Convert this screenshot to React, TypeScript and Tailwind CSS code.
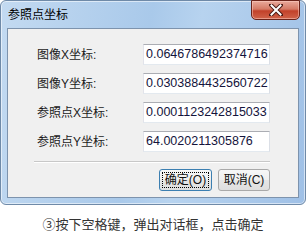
const rows = [
  { label: '图像X坐标:', value: '0.0646786492374716' },
  { label: '图像Y坐标:', value: '0.0303884432560722' },
  { label: '参照点X坐标:', value: '0.0001123242815033' },
  { label: '参照点Y坐标:', value: '64.0020211305876' },
];

const font = "font-['Liberation_Sans','Noto_Sans_CJK_SC',sans-serif]";

export default function App() {
  return (
    <div className={`w-[306px] h-[240px] bg-white flex flex-col ${font}`}>
      {/* window frame */}
      <div className="h-[205px] flex flex-col rounded-[6px] border border-[#6f8aa8] bg-[linear-gradient(100deg,#c3daf1_0%,#a9c9ea_45%,#b7d3ef_60%,#9fc0e6_100%)] shadow-[inset_0_0_0_1px_rgba(255,255,255,0.55)]">
        {/* title bar */}
        <div className="h-[27px] flex items-start">
          <span className="pl-[7px] pt-[7px] text-[12px] leading-[14px] text-black">参照点坐标</span>
          <button className="ml-auto mr-[5px] -mt-px w-[49px] h-[20px] flex items-center justify-center rounded-b-[5px] border border-[#6b231a] bg-[linear-gradient(180deg,#e9a99b_0%,#d57a66_45%,#c2412a_55%,#d0634a_100%)] shadow-[inset_0_0_0_1px_rgba(255,210,200,0.5)]">
            <svg width="14" height="12" viewBox="0 0 14 12">
              <path d="M2 1 L12 11 M12 1 L2 11" stroke="#4a1a14" strokeWidth="4" strokeLinecap="square" />
              <path d="M2.5 1.5 L11.5 10.5 M11.5 1.5 L2.5 10.5" stroke="#ffffff" strokeWidth="2" strokeLinecap="square" />
            </svg>
          </button>
        </div>
        {/* client area */}
        <div className="mx-[6px] h-[170px] border border-[#7d93ad] bg-[#f0f0f0] flex flex-col pt-[15px] pl-[29px] pr-[28px]">
          <div className="flex flex-col gap-[8px]">
            {rows.map((r) => (
              <div key={r.label} className="flex items-center h-[21px]">
                <span className="w-[106px] text-[12px] text-[#1b1b1b]">{r.label}</span>
                <div className="w-[127px] h-[21px] border border-[#abadb3] border-l-[#e2e3ea] border-r-[#dbdfe6] border-b-[#e3e9ef] bg-white flex items-center pl-[2px] text-[12.5px] text-[#14143c] leading-none">
                  {r.value}
                </div>
              </div>
            ))}
          </div>
          <div className="mt-[9px] ml-[-3px] h-px bg-[#c8c8c8] border-b border-white box-content" />
          <div className="mt-[6px] flex justify-end gap-[6px]">
            <button className="w-[53px] h-[22px] rounded-[3px] border border-[#3c7fb1] bg-[linear-gradient(180deg,#f7f7f7_0%,#efefef_50%,#e6e6e6_51%,#dedede_100%)] p-[2px] flex">
              <span className="flex-1 flex items-center justify-center border border-dotted border-black text-[12px] text-[#111]">确定(O)</span>
            </button>
            <button className="w-[52px] h-[22px] rounded-[3px] border border-[#a9a9a9] bg-[linear-gradient(180deg,#f7f7f7_0%,#efefef_50%,#e6e6e6_51%,#dedede_100%)] flex items-center justify-center text-[12px] text-[#111]">
              取消(C)
            </button>
          </div>
        </div>
      </div>
      {/* caption */}
      <div className="flex-1 flex items-center justify-center pt-[5px] text-[13px] text-[#333333]">
        ③按下空格键，弹出对话框，点击确定
      </div>
    </div>
  );
}
